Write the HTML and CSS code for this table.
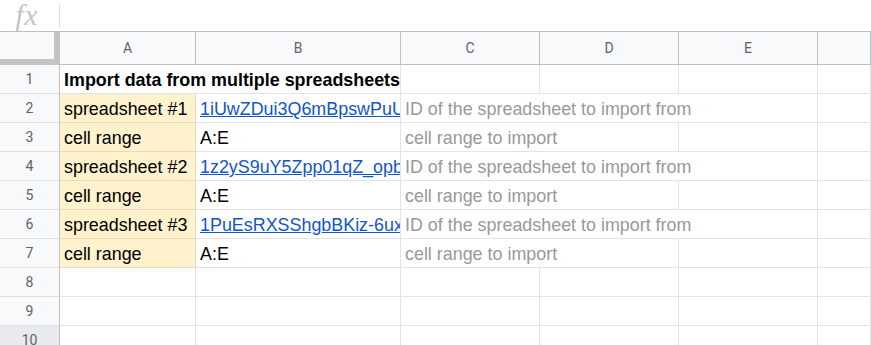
FILE: index.html
```html
<!DOCTYPE html>
<html>
<head>
<meta charset="utf-8">
<link rel="stylesheet" href="styles.css">
</head>
<body>
<div class="formula-bar">
  <span class="fx">fx</span>
  <span class="sep"></span>
</div>
<div class="sheet">
  <div class="corner"></div>
  <div class="colhead">A</div>
  <div class="colhead">B</div>
  <div class="colhead">C</div>
  <div class="colhead">D</div>
  <div class="colhead">E</div>
  <div class="colhead"></div>

  <div class="rowhead">1</div>
  <div class="cell bold span2">Import data from multiple spreadsheets</div>
  <div class="cell"></div>
  <div class="cell"></div>
  <div class="cell"></div>
  <div class="cell"></div>

  <div class="rowhead">2</div>
  <div class="cell label">spreadsheet #1</div>
  <div class="cell clip"><a class="link" href="#">1iUwZDui3Q6mBpswPuU</a></div>
  <div class="cell note span3">ID of the spreadsheet to import from</div>
  <div class="cell"></div>

  <div class="rowhead">3</div>
  <div class="cell label">cell range</div>
  <div class="cell">A:E</div>
  <div class="cell note span2">cell range to import</div>
  <div class="cell"></div>
  <div class="cell"></div>

  <div class="rowhead">4</div>
  <div class="cell label">spreadsheet #2</div>
  <div class="cell clip"><a class="link" href="#">1z2yS9uY5Zpp01qZ_opb</a></div>
  <div class="cell note span3">ID of the spreadsheet to import from</div>
  <div class="cell"></div>

  <div class="rowhead">5</div>
  <div class="cell label">cell range</div>
  <div class="cell">A:E</div>
  <div class="cell note span2">cell range to import</div>
  <div class="cell"></div>
  <div class="cell"></div>

  <div class="rowhead">6</div>
  <div class="cell label">spreadsheet #3</div>
  <div class="cell clip"><a class="link" href="#">1PuEsRXSShgbBKiz-6ux</a></div>
  <div class="cell note span3">ID of the spreadsheet to import from</div>
  <div class="cell"></div>

  <div class="rowhead">7</div>
  <div class="cell label">cell range</div>
  <div class="cell">A:E</div>
  <div class="cell note span2">cell range to import</div>
  <div class="cell"></div>
  <div class="cell"></div>

  <div class="rowhead">8</div>
  <div class="cell"></div><div class="cell"></div><div class="cell"></div><div class="cell"></div><div class="cell"></div><div class="cell"></div>

  <div class="rowhead">9</div>
  <div class="cell"></div><div class="cell"></div><div class="cell"></div><div class="cell"></div><div class="cell"></div><div class="cell"></div>

  <div class="rowhead dark">10</div>
  <div class="cell"></div><div class="cell"></div><div class="cell"></div><div class="cell"></div><div class="cell"></div><div class="cell"></div>
</div>
</body>
</html>
```
FILE: styles.css
```css
html, body {
  margin: 0;
  padding: 0;
  background: #ffffff;
  overflow: hidden;
}

body {
  width: 871px;
  height: 345px;
}

.formula-bar {
  height: 31px;
  border-bottom: 1px solid #c0c0c0;
  display: flex;
  align-items: center;
}

.fx {
  width: 54px;
  margin-right: 5px;
  text-align: center;
  font: italic 29px "Liberation Serif", "DejaVu Serif", serif;
  color: #c4c4c4;
  line-height: 31px;
  letter-spacing: 1px;
}

.sep {
  width: 1px;
  height: 24px;
  background: #dadce0;
}

.sheet {
  display: grid;
  grid-template-columns: 60px 136px 205px 139px 139px 139px 1fr;
  grid-template-rows: 33px repeat(10, 29px);
  width: 871px;
}

.corner {
  background: #f8f9fa;
  border-right: 6px solid #c4c4c4;
  border-bottom: 6px solid #c4c4c4;
}

.colhead {
  background: #f8f9fa;
  border-right: 1px solid #c0c0c0;
  border-bottom: 1px solid #c0c0c0;
  display: flex;
  align-items: center;
  justify-content: center;
  font: 14px Roboto, "Liberation Sans", sans-serif;
  color: #5f6368;
}

.rowhead {
  background: #f8f9fa;
  border-right: 1px solid #c0c0c0;
  border-bottom: 1px solid #e0e0e0;
  display: flex;
  align-items: center;
  justify-content: center;
  font: 14px Roboto, "Liberation Sans", sans-serif;
  color: #5f6368;
}

.rowhead.dark {
  background: #e8eaed;
}

.cell {
  border-right: 1px solid #e2e3e3;
  border-bottom: 1px solid #e2e3e3;
  display: flex;
  align-items: flex-end;
  padding: 0 4px 2px 4px;
  overflow: hidden;
  white-space: nowrap;
  font: 17.9px "Liberation Sans", Arial, sans-serif;
  color: #000000;
  min-width: 0;
}

.cell.clip {
  padding-right: 0;
}

.cell.label {
  background: #fff2cc;
  border-right-color: #eadcb9;
  border-bottom-color: #eadcb9;
}

.cell.bold {
  font-weight: bold;
}

.cell.note {
  color: #999999;
}

.span2 {
  grid-column: span 2;
}

.span3 {
  grid-column: span 3;
}

.link {
  display: block;
  overflow: hidden;
  color: #1155cc;
  text-decoration: underline;
}
```
